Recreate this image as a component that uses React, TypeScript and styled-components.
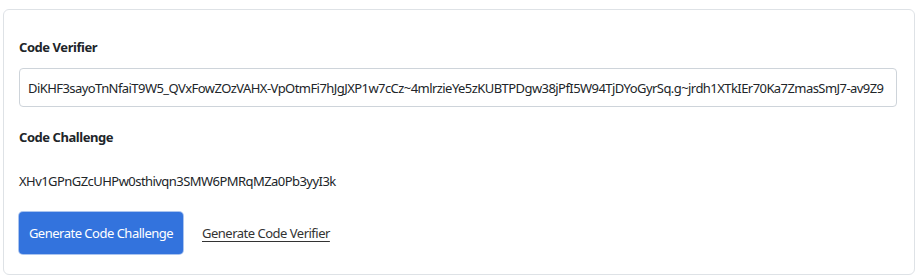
import React from "react";
import styled, { createGlobalStyle } from "styled-components";

const GlobalStyle = createGlobalStyle`
  body {
    margin: 0;
    background: #fff;
    font-family: "Noto Sans", "DejaVu Sans", sans-serif;
    font-size: 13px;
    letter-spacing: -0.55px;
    color: #212529;
  }
`;

const Page = styled.div`
  padding: 9px 3px 2px 3px;
`;

const Card = styled.div`
  border: 1px solid #dee2e6;
  border-radius: 6px;
  padding: 25px 17px 20px 15px;
  display: flex;
  flex-direction: column;
`;

const Label = styled.div<{ $gap?: number }>`
  font-weight: 700;
  font-size: 13px;
  letter-spacing: -0.45px;
  line-height: 24px;
  margin-top: ${(p) => p.$gap ?? 0}px;
  color: #212529;
`;

const Field = styled.input`
  height: 39px;
  margin-top: 9px;
  box-sizing: border-box;
  border: 1px solid #ced4da;
  border-radius: 4px;
  padding: 0 8px;
  font: inherit;
  letter-spacing: -0.56px;
  color: #212529;
  width: 100%;
  outline: none;
`;

const Value = styled.div`
  line-height: 24px;
  margin-top: 20px;
`;

const Actions = styled.div`
  display: flex;
  align-items: center;
  gap: 19px;
  margin-top: 19px;
`;

const Primary = styled.button`
  width: 164px;
  height: 42px;
  padding: 0;
  border: none;
  border-radius: 4px;
  background: #3373dd;
  color: #fff;
  font: inherit;
  letter-spacing: -0.5px;
  box-shadow: 0 0 0 1px #aac4ef;
`;

const LinkButton = styled.button`
  background: none;
  border: none;
  padding: 0;
  font: inherit;
  letter-spacing: -0.5px;
  color: #333;
  text-decoration: underline;
  text-underline-offset: 3px;
`;

const verifier =
  "DiKHF3sayoTnNfaiT9W5_QVxFowZOzVAHX-VpOtmFi7hJgJXP1w7cCz~4mlrzieYe5zKUBTPDgw38jPfI5W94TjDYoGyrSq.g~jrdh1XTkIEr70Ka7ZmasSmJ7-av9Z9";

export default function App() {
  return (
    <Page>
      <GlobalStyle />
      <Card>
        <Label>Code Verifier</Label>
        <Field defaultValue={verifier} readOnly />
        <Label $gap={18}>Code Challenge</Label>
        <Value>XHv1GPnGZcUHPw0sthivqn3SMW6PMRqMZa0Pb3yyI3k</Value>
        <Actions>
          <Primary>Generate Code Challenge</Primary>
          <LinkButton>Generate Code Verifier</LinkButton>
        </Actions>
      </Card>
    </Page>
  );
}
